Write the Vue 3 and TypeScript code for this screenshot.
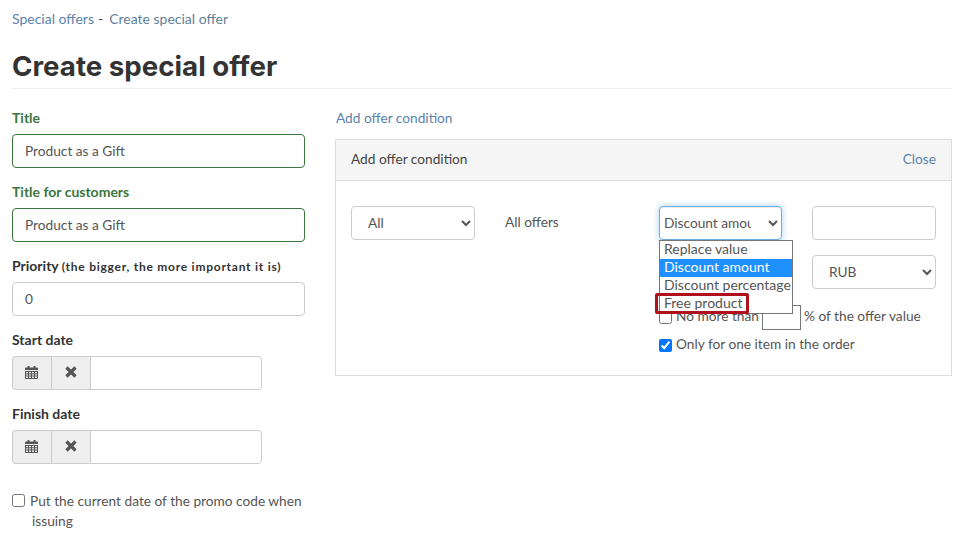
<script setup lang="ts">
const options = ['Replace value', 'Discount amount', 'Discount percentage', 'Free product']
</script>

<template>
  <div class="page">
    <nav class="crumbs"><a>Special offers</a><span class="sep">-</span><a class="current">Create special offer</a></nav>
    <h1>Create special offer</h1>
    <div class="columns">
      <form class="left">
        <div class="field ok">
          <label>Title</label>
          <input class="text" value="Product as a Gift" />
        </div>
        <div class="field ok">
          <label>Title for customers</label>
          <input class="text" value="Product as a Gift" />
        </div>
        <div class="field">
          <label>Priority <small>(the bigger, the more important it is)</small></label>
          <input class="text" value="0" />
        </div>
        <div v-for="name in ['Start date', 'Finish date']" :key="name" class="field">
          <label>{{ name }}</label>
          <div class="date">
            <span class="addon">
              <svg class="cal" width="13" height="14" viewBox="0 0 13 14">
                <path fill="#555" d="M0 3.500A1 1 0 0 1 1 2.500h1.500V1h2v1.500h4V1h2v1.500H12a1 1 0 0 1 1 1V5H0z" />
                <path fill="#555" fill-rule="evenodd" d="M0 6h13v7a1 1 0 0 1-1 1H1a1 1 0 0 1-1-1zm1 1v1.300h2V7zm3 0v1.300h2V7zm3 0v1.300h2V7zm3 0v1.300h2V7zM1 9.300v1.300h2V9.300zm3 0v1.300h2V9.300zm3 0v1.300h2V9.300zm3 0v1.300h2V9.300zM1 11.600V13h2v-1.400zm3 0V13h2v-1.400zm3 0V13h2v-1.400zm3 0V13h2v-1.400z" />
              </svg>
            </span>
            <span class="addon">
              <svg width="12" height="12" viewBox="0 0 12 12">
                <path fill="none" stroke="#555" stroke-width="3.200" d="M1.500 1.500l9 9M10.500 1.500l-9 9" />
              </svg>
            </span>
            <input class="date-input" />
          </div>
        </div>
        <label class="check wrap"><input type="checkbox" /><span>Put the current date of the promo code when issuing</span></label>
      </form>

      <section class="right">
        <a class="add-link">Add offer condition</a>
        <div class="panel">
          <header class="panel-head"><span>Add offer condition</span><a>Close</a></header>
          <div class="panel-body">
            <select class="sel all"><option>All</option></select>
            <span class="offers">All offers</span>
            <div class="discount">
              <select class="sel focus"><option>Discount amount</option></select>
              <ul class="menu">
                <li v-for="o in options" :key="o" :class="{ active: o === 'Discount amount' }">{{ o }}</li>
              </ul>
              <div class="mark"></div>
              <div class="checks">
                <label class="check"><input type="checkbox" /><span>No more than</span><input class="mini" /><span>% of the offer value</span></label>
                <label class="check"><input type="checkbox" checked /><span>Only for one item in the order</span></label>
              </div>
            </div>
            <div class="values">
              <input class="text value" />
              <select class="sel rub"><option>RUB</option></select>
            </div>
          </div>
        </div>
      </section>
    </div>
  </div>
</template>

<style scoped>
.page {
  box-sizing: border-box;
  width: 963px;
  height: 535px;
  overflow: hidden;
  padding: 10px 11px 0 12px;
  font-family: Lato, "Open Sans", sans-serif;
  font-size: 13.7px;
  line-height: 18px;
  color: #555;
}
a { color: #5a84ad; }
.crumbs { display: flex; height: 18px; color: #444; font-size: 14px; }
.sep { margin: 0 6px 0 4px; }
.crumbs .current { color: #5f7f99; }
h1 {
  margin: 18px 0 0;
  height: 42px;
  box-sizing: content-box;
  border-bottom: 1px solid #eee;
  font-family: Inter, Lato, sans-serif;
  font-size: 27.7px;
  line-height: 40px;
  font-weight: 700;
  color: #333;
}
.columns { display: flex; gap: 30px; margin-top: 20px; }
.left { width: 293px; flex: none; }
.field { margin-bottom: 15px; }
.field label { display: block; height: 18px; margin-bottom: 7px; font-size: 14px; font-weight: 700; color: #333; white-space: nowrap; }
.field small { font-size: 12px; letter-spacing: .75px; }
.field.ok label { color: #3c763d; }
.text {
  box-sizing: border-box;
  width: 100%;
  height: 34px;
  padding: 0 12px 2px;
  border: 1px solid #ccc;
  border-radius: 4px;
  font: inherit;
  color: #555;
  outline: none;
}
.ok .text { border-color: #3c763d; }
.date { display: flex; width: 250px; height: 34px; }
.addon {
  box-sizing: border-box;
  width: 39px;
  padding-bottom: 2px;
  display: flex;
  align-items: center;
  justify-content: center;
  background: #eee;
  border: 1px solid #ccc;
  border-right: 0;
}
.addon:first-child { border-radius: 4px 0 0 4px; }
.cal { margin-right: 1px; }
.date-input {
  box-sizing: border-box;
  flex: 1;
  min-width: 0;
  border: 1px solid #ccc;
  border-radius: 0 4px 4px 0;
  outline: none;
}
.check { display: flex; align-items: center; color: #555; }
.check input[type='checkbox'] { width: 13px; height: 13px; margin: 0 4px 0 0; flex: none; }
.check.wrap { display: block; margin-top: 27px; padding-left: 20px; text-indent: -20px; line-height: 20px; }
.check.wrap input { vertical-align: -1px; margin-right: 5px; }
.right { flex: 1; min-width: 0; margin-top: 0; }
.add-link { display: block; height: 18px; margin-left: 1px; }
.panel { margin-top: 12px; height: 237px; box-sizing: border-box; border: 1px solid #ddd; }
.panel-head {
  box-sizing: border-box;
  height: 41px;
  display: flex;
  align-items: center;
  justify-content: space-between;
  padding: 0 15px 2px;
  background: #f5f5f5;
  border-bottom: 1px solid #ddd;
  color: #444;
}
.panel-body { display: flex; padding: 25px 15px 0; align-items: flex-start; }
.sel {
  box-sizing: border-box;
  height: 34px;
  border: 1px solid #ccc;
  border-radius: 4px;
  background: #fff;
  font: inherit;
  color: #555;
  outline: none;
  padding-bottom: 2px;
}
.all { width: 124px; padding-left: 12px; padding-right: 12px; flex: none; }
.offers { width: 154px; margin-left: 30px; flex: none; padding-top: 7px; }
.discount { position: relative; width: 123px; flex: none; }
.focus {
  display: block;
  width: 123px;
  padding-left: 0;
  padding-right: 14px;
  border-color: #66afe9;
  box-shadow: inset 0 1px 1px rgba(0, 0, 0, .075), 0 0 6px rgba(102, 175, 233, .6);
}
.menu {
  position: absolute;
  z-index: 2;
  left: 0;
  top: 34px;
  box-sizing: border-box;
  width: 134px;
  margin: 0;
  padding: 0;
  list-style: none;
  background: #fff;
  border: 1px solid #767676;
  white-space: nowrap;
  font-size: 14px;
}
.menu li { height: 18px; line-height: 16px; padding-left: 4px; color: #555; }
.menu li.active { background: #1e90ff; color: #fff; }
.mark {
  position: absolute;
  z-index: 3;
  left: -4px;
  top: 87px;
  width: 94px;
  height: 21px;
  box-sizing: border-box;
  border: 3px solid #b00f1c;
  border-radius: 2px;
}
.checks { position: absolute; left: 0; top: 98px; width: 290px; }
.checks .check { height: 26px; margin-bottom: 2px; line-height: 16px; white-space: nowrap; }
.checks .check span { padding-bottom: 2px; }
.mini {
  box-sizing: border-box;
  width: 39px;
  height: 25px;
  margin: 0 3px 0 3px;
  border: 1px solid #767676;
  outline: none;
}
.values { margin-left: 30px; width: 124px; flex: none; display: flex; flex-direction: column; gap: 15px; }
.rub { width: 100%; padding-left: 12px; padding-right: 12px; }
</style>
